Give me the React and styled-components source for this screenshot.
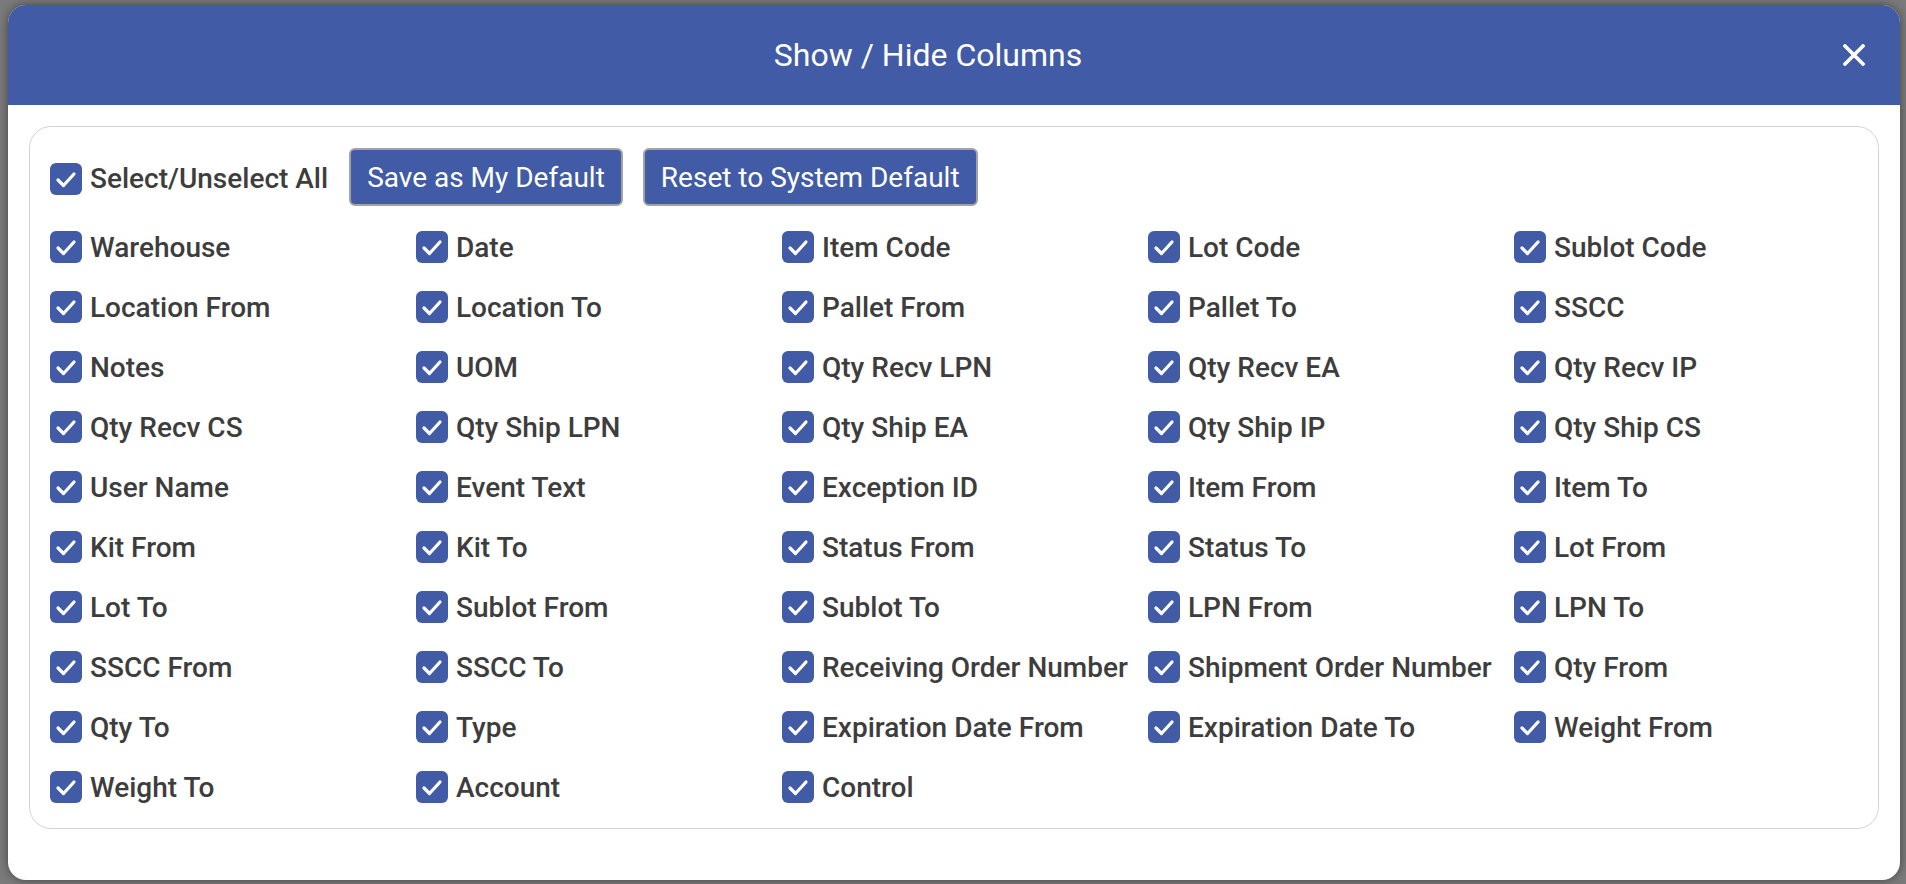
import styled, { createGlobalStyle } from 'styled-components';

const columns = [
  'Warehouse', 'Date', 'Item Code', 'Lot Code', 'Sublot Code',
  'Location From', 'Location To', 'Pallet From', 'Pallet To', 'SSCC',
  'Notes', 'UOM', 'Qty Recv LPN', 'Qty Recv EA', 'Qty Recv IP',
  'Qty Recv CS', 'Qty Ship LPN', 'Qty Ship EA', 'Qty Ship IP', 'Qty Ship CS',
  'User Name', 'Event Text', 'Exception ID', 'Item From', 'Item To',
  'Kit From', 'Kit To', 'Status From', 'Status To', 'Lot From',
  'Lot To', 'Sublot From', 'Sublot To', 'LPN From', 'LPN To',
  'SSCC From', 'SSCC To', 'Receiving Order Number', 'Shipment Order Number', 'Qty From',
  'Qty To', 'Type', 'Expiration Date From', 'Expiration Date To', 'Weight From',
  'Weight To', 'Account', 'Control',
];

const Global = createGlobalStyle`
  html, body {
    margin: 0;
    padding: 0;
    background: #7a7a7a;
    font-family: Roboto, "Liberation Sans", sans-serif;
  }
`;

const Page = styled.div`
  width: 1906px;
  height: 884px;
  padding: 5px 6px 4px 8px;
  box-sizing: border-box;
`;

const Modal = styled.div`
  height: 100%;
  background: #fff;
  border-radius: 18px;
  overflow: hidden;
  box-shadow: 0 0 10px rgba(0, 0, 0, 0.45);
  display: flex;
  flex-direction: column;
`;

const Header = styled.div`
  height: 100px;
  flex-shrink: 0;
  background: #415ba6;
  display: flex;
  align-items: center;
  padding: 0 35px 0 16px;
`;

const Title = styled.div`
  flex: 1;
  text-align: center;
  color: #fff;
  font-size: 32px;
  margin-right: 11px;
`;

const Close = styled.button`
  width: 22px;
  height: 22px;
  padding: 0;
  border: none;
  background: none;
  display: flex;
  cursor: pointer;
`;

const Panel = styled.div`
  margin: 21px 21px 0 21px;
  border: 1.5px solid #d3d3d3;
  border-radius: 22px;
  padding: 21px 0 11px 20px;
`;

const Toolbar = styled.div`
  display: flex;
  align-items: center;
  height: 58px;
  margin-bottom: 11px;
`;

const Button = styled.button`
  height: 58px;
  padding: 0 16px;
  margin-left: ${({ first }) => (first ? '21px' : '20px')};
  background: #415ba6;
  color: #fff;
  font-family: Roboto, "Liberation Sans", sans-serif;
  font-size: 28px;
  border: 2px solid #a3a3a3;
  border-radius: 6px;
  cursor: pointer;
`;

const Grid = styled.div`
  display: grid;
  grid-template-columns: repeat(5, 366px);
  grid-auto-rows: 60px;
`;

const Option = styled.label`
  display: flex;
  align-items: center;
  gap: 8px;
  color: #3d3d3d;
  font-size: 28px;
  font-weight: 500;
  white-space: nowrap;
  cursor: pointer;
  margin-top: ${({ top }) => (top ? '3px' : '0')};
`;

const Box = styled.span`
  width: 32px;
  height: 32px;
  border-radius: 6px;
  background: #415ba6;
  display: flex;
  flex-shrink: 0;
`;

const Check = () => (
  <Box>
    <svg width="32" height="32" viewBox="0 0 32 32">
      <polyline points="8,17 13.5,22.5 24,11" fill="none" stroke="#fff" strokeWidth="3.2" strokeLinecap="round" strokeLinejoin="round" />
    </svg>
  </Box>
);

const App = () => {
  return (
    <Page>
      <Global />
      <Modal>
        <Header>
          <Title>Show / Hide Columns</Title>
          <Close>
            <svg width="22" height="22" viewBox="0 0 22 22">
              <path d="M2 2 L20 20 M20 2 L2 20" stroke="#fff" strokeWidth="3.6" strokeLinecap="square" />
            </svg>
          </Close>
        </Header>
        <Panel>
          <Toolbar>
            <Option top>
              <Check />
              <span>Select/Unselect All</span>
            </Option>
            <Button first>Save as My Default</Button>
            <Button>Reset to System Default</Button>
          </Toolbar>
          <Grid>
            {columns.map((c) => (
              <Option key={c}>
                <Check />
                <span>{c}</span>
              </Option>
            ))}
          </Grid>
        </Panel>
      </Modal>
    </Page>
  );
};

export default App;
